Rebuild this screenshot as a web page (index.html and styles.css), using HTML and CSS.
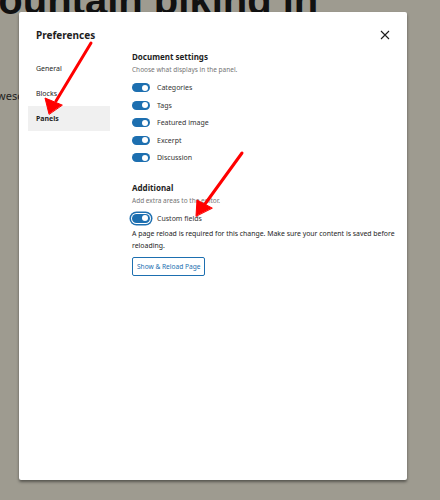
FILE: index.html
```html
<!DOCTYPE html>
<html lang="en">
<head>
  <meta charset="UTF-8" />
  <title>Preferences</title>
  <link rel="stylesheet" href="styles.css">
</head>
<body>
  <div class="page">
    <h1 class="post-title">Mountain biking in</h1>
    <p class="post-text">Awesc</p>
  </div>

  <div class="modal">
    <div class="modal-head">
      <h2>Preferences</h2>
      <button class="close" aria-label="Close">
        <svg width="10" height="10" viewBox="0 0 10 10"><path d="M1 1L9 9M9 1L1 9" stroke="#1e1e1e" stroke-width="1.1" fill="none"/></svg>
      </button>
    </div>
    <div class="modal-body">
      <nav class="tabs">
        <button>General</button>
        <button>Blocks</button>
        <button class="active">Panels</button>
      </nav>
      <div class="panel">
        <section class="group">
          <h3>Document settings</h3>
          <p class="hint">Choose what displays in the panel.</p>
          <label class="row"><span class="toggle"></span>Categories</label>
          <label class="row"><span class="toggle"></span>Tags</label>
          <label class="row"><span class="toggle"></span>Featured image</label>
          <label class="row"><span class="toggle"></span>Excerpt</label>
          <label class="row"><span class="toggle"></span>Discussion</label>
        </section>
        <section class="group">
          <h3>Additional</h3>
          <p class="hint">Add extra areas to the editor.</p>
          <label class="row"><span class="toggle focus"></span>Custom fields</label>
          <p class="note">A page reload is required for this change. Make sure your content is saved before reloading.</p>
          <button class="reload">Show &amp; Reload Page</button>
        </section>
      </div>
    </div>
  </div>

  <svg class="arrows" width="440" height="500" viewBox="0 0 440 500">
    <g stroke="#f00" stroke-width="3" fill="#f00" stroke-linecap="round">
      <line x1="91" y1="43" x2="56" y2="101"/>
      <polygon points="49,114 45,98 62,105" stroke-width="1"/>
      <line x1="242" y1="153" x2="205" y2="204"/>
      <polygon points="196,216 197,200 212,208" stroke-width="1"/>
    </g>
  </svg>
</body>
</html>
```

FILE: styles.css
```css
* {margin: 0; padding: 0; box-sizing: border-box;}
body {
  font-family: 'Noto Sans', sans-serif;
  background: #9e9b90;
  color: #1e1e1e;
  overflow: hidden;
  width: 440px;
  height: 500px;
}
.post-title {
  font-family: 'Liberation Sans', sans-serif;
  font-size: 40px;
  font-weight: 700;
  line-height: 40px;
  margin: -20px 0 0 -35px;
  color: #111;
  white-space: nowrap;
}
.post-text {
  font-size: 11px;
  margin: 68px 0 0 -10px;
  color: #222;
}
.modal {
  position: absolute;
  left: 19px;
  top: 12px;
  width: 388px;
  height: 468px;
  background: #fff;
  box-shadow: 0 2px 3px rgba(0, 0, 0, 0.45);
  border-radius: 2px;
}
.modal-head {
  display: flex;
  justify-content: space-between;
  align-items: center;
  padding: 16px 17px 0 17px;
  height: 30px;
}
.modal-head h2 {
  font-size: 10px;
  font-weight: 700;
}
.close {
  background: none;
  border: none;
  display: flex;
}
.modal-body {
  display: grid;
  grid-template-columns: 82px 1fr;
  gap: 22px;
  padding: 9px 0 0 9px;
}
.tabs {
  display: flex;
  flex-direction: column;
  padding-top: 5px;
}
.tabs button {
  height: 25px;
  text-align: left;
  padding-left: 8px;
  background: none;
  border: none;
  font-family: inherit;
  font-size: 7px;
  color: #1e1e1e;
}
.tabs button.active {
  background: #f0f0f0;
  font-weight: 700;
}
.group {
  display: flex;
  flex-direction: column;
  align-items: flex-start;
}
.group + .group {
  margin-top: 15px;
}
.group h3 {
  font-size: 8px;
  font-weight: 700;
  line-height: 12px;
}
.hint {
  font-size: 6.5px;
  color: #757575;
  line-height: 13px;
  margin-bottom: 3px;
}
.row {
  display: flex;
  align-items: center;
  gap: 7px;
  height: 17.5px;
  font-size: 7px;
  color: #333;
}
.toggle {
  position: relative;
  width: 18px;
  height: 9px;
  border-radius: 5px;
  background: #1d6fb0;
}
.toggle::after {
  content: "";
  position: absolute;
  right: 2px;
  top: 1.5px;
  width: 6px;
  height: 6px;
  border-radius: 50%;
  background: #fff;
}
.toggle.focus {
  box-shadow: 0 0 0 1px #fff, 0 0 0 2.5px #1d6fb0;
}
.note {
  font-size: 6.9px;
  line-height: 12px;
  color: #1e1e1e;
  margin-top: 1px;
  padding-right: 8px;
}
.reload {
  margin-top: 5px;
  height: 19px;
  padding: 0 4px;
  background: #fff;
  border: 1px solid #1d6fb0;
  border-radius: 2px;
  color: #1d6fb0;
  font-family: inherit;
  font-size: 6.6px;
}
.arrows {
  position: absolute;
  top: 0;
  left: 0;
  pointer-events: none;
}
```
